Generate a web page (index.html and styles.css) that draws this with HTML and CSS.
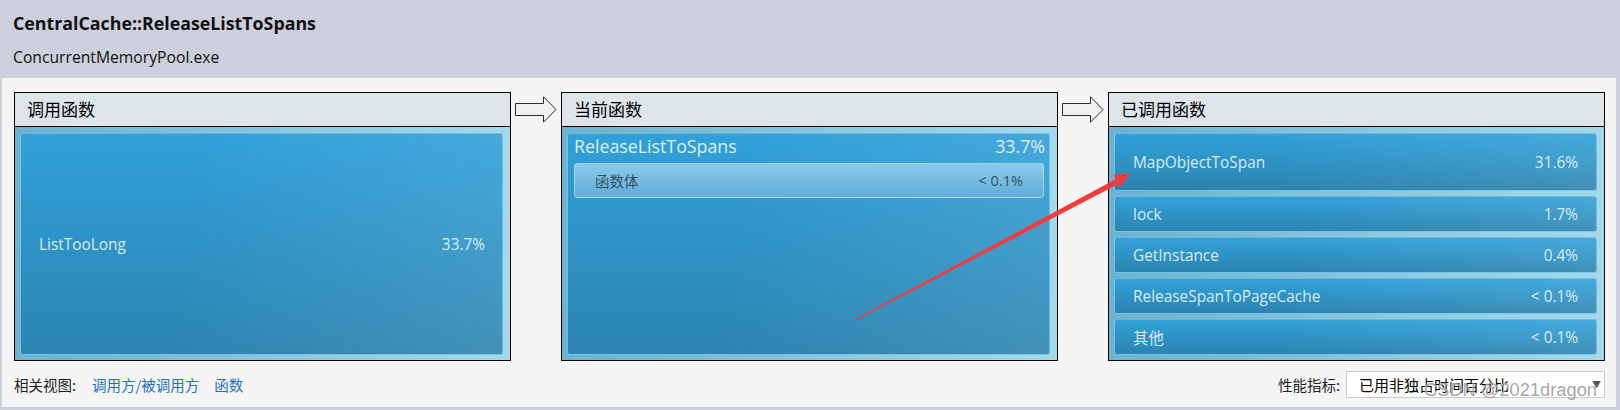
FILE: index.html
```html
<!DOCTYPE html>
<html lang="zh-CN">
<head>
<meta charset="utf-8">
<title>CentralCache::ReleaseListToSpans</title>
<link rel="stylesheet" href="styles.css">
</head>
<body>
<div class="window">
  <header class="hdr">
    <div class="title">CentralCache::ReleaseListToSpans</div>
    <div class="sub">ConcurrentMemoryPool.exe</div>
  </header>
  <main class="content">
    <div class="panels">
      <section class="panel">
        <div class="ph">调用函数</div>
        <div class="pb">
          <div class="tile big"><span>ListTooLong</span><span>33.7%</span></div>
        </div>
      </section>
      <div class="flow">
        <svg width="42" height="27" viewBox="0 0 42 27"><path d="M0.5 7.5H28.5V0.8L41 13.5L28.5 26.2V19.5H0.5Z" fill="#f2f2f2" stroke="#2b2b2b" stroke-width="1"/></svg>
      </div>
      <section class="panel">
        <div class="ph">当前函数</div>
        <div class="pb">
          <div class="tile cur">
            <div class="cur-head"><span>ReleaseListToSpans</span><span>33.7%</span></div>
            <div class="body-item"><span>函数体</span><span>&lt; 0.1%</span></div>
          </div>
        </div>
      </section>
      <div class="flow">
        <svg width="42" height="27" viewBox="0 0 42 27"><path d="M0.5 7.5H28.5V0.8L41 13.5L28.5 26.2V19.5H0.5Z" fill="#f2f2f2" stroke="#2b2b2b" stroke-width="1"/></svg>
      </div>
      <section class="panel">
        <div class="ph">已调用函数</div>
        <div class="pb list">
          <div class="tile item first"><span>MapObjectToSpan</span><span>31.6%</span></div>
          <div class="tile item"><span>lock</span><span>1.7%</span></div>
          <div class="tile item"><span>GetInstance</span><span>0.4%</span></div>
          <div class="tile item"><span>ReleaseSpanToPageCache</span><span>&lt; 0.1%</span></div>
          <div class="tile item"><span>其他</span><span>&lt; 0.1%</span></div>
        </div>
      </section>
    </div>
    <div class="footer">
      <div class="related">
        <span class="lbl">相关视图:</span>
        <a class="lnk" href="#">调用方/被调用方</a>
        <a class="lnk" href="#">函数</a>
      </div>
      <div class="metric">
        <span class="lbl">性能指标:</span>
        <div class="select"><span>已用非独占时间百分比</span><span class="caret">▼</span></div>
      </div>
    </div>
  </main>
  <svg class="annot" width="1620" height="410" viewBox="0 0 1620 410">
    <polygon points="855.3,320.6 1118.4,184.1 1119.5,188.5 1130.5,173 1113.5,175 1115.6,179.3 854.6,319.4" fill="#f53b3b"/>
  </svg>
  <div class="wm">CSDN @2021dragon</div>
</div>
</body>
</html>
```
FILE: styles.css
```css
* { box-sizing: border-box; }
html, body { margin: 0; padding: 0; }
body {
  width: 1620px;
  height: 410px;
  overflow: hidden;
  font-family: "Open Sans", "Noto Sans CJK SC", sans-serif;
  background: #cdcfdc;
}
.window {
  position: relative;
  width: 1620px;
  height: 410px;
  background: #cdcfdc;
  display: flex;
  flex-direction: column;
}
.hdr {
  height: 78px;
  padding: 11px 0 0 13px;
  color: #111;
}
.title {
  font-weight: 700;
  font-size: 17.8px;
  line-height: 24px;
}
.sub {
  font-size: 15.7px;
  line-height: 22px;
  margin-top: 11px;
}
.content {
  margin: 0 4px 3px 2px;
  flex: 1;
  background: #f5f5f5;
  display: flex;
  flex-direction: column;
}
.panels {
  display: flex;
  padding: 14px 0 0 12px;
  height: 283px;
}
.panel {
  width: 497px;
  height: 269px;
  border: 1px solid #000;
  display: flex;
  flex-direction: column;
}
.ph {
  height: 34px;
  border-bottom: 1px solid #000;
  background: #dde5e9;
  font-family: "Noto Sans CJK SC", sans-serif;
  font-size: 17px;
  line-height: 32px;
  padding-left: 12px;
  color: #000;
}
.pb {
  flex: 1;
  padding: 6px 7px 5px 5px;
  background: linear-gradient(to right, #6db2cf, #a4d9eb);
  display: flex;
  flex-direction: column;
}
.flow {
  width: 50px;
  display: flex;
  justify-content: center;
  padding-top: 4px;
}
.tile {
  border: 1px solid rgba(170, 220, 245, 0.55);
  border-radius: 3px;
  background:
    linear-gradient(100deg, rgba(255,255,255,0) 35%, rgba(255,255,255,0.1) 100%),
    linear-gradient(to bottom, #31a1da, #2c84b0);
  color: #d6ecf8;
  font-size: 15.4px;
  display: flex;
  justify-content: space-between;
  align-items: center;
}
.big {
  flex: 1;
  padding: 0 17px 0 18px;
}
.cur {
  flex: 1;
  flex-direction: column;
  justify-content: flex-start;
  align-items: stretch;
  padding: 0 4px 0 6px;
}
.cur-head {
  height: 24px;
  display: flex;
  justify-content: space-between;
  align-items: center;
  font-size: 17.8px;
  color: #ddeff9;
}
.body-item {
  margin: 5px 1px 0 0;
  height: 35px;
  border: 1px solid rgba(190, 228, 246, 0.6);
  border-radius: 4px;
  background: linear-gradient(to bottom, #8acbeb, #62acd8);
  color: #33505f;
  font-size: 14.5px;
  display: flex;
  justify-content: space-between;
  align-items: center;
  padding: 0 20px 0 20px;
}
.list { gap: 5px; }
.item {
  height: 36px;
  padding: 0 18px 0 18px;
}
.item.first { flex: 1; height: auto; }
.footer {
  flex: 1;
  display: flex;
  justify-content: space-between;
  align-items: center;
  padding: 0 11px 0 12px;
  font-family: "Noto Sans CJK SC", sans-serif;
  font-size: 14.5px;
}
.related { display: flex; align-items: center; }
.lbl { color: #1e1e1e; }
.lnk {
  color: #2470c4;
  text-decoration: none;
  margin-left: 16px;
}
.related .lnk + .lnk { margin-left: 15px; }
.metric { display: flex; align-items: center; gap: 6px; }
.select {
  width: 259px;
  height: 27px;
  border: 1px solid #c9c9d7;
  background: #fff;
  display: flex;
  align-items: center;
  justify-content: space-between;
  padding: 0 3px 0 12px;
  font-size: 15px;
  color: #000;
}
.caret { font-size: 9px; color: #555; }
.annot {
  position: absolute;
  left: 0;
  top: 0;
  pointer-events: none;
}
.wm {
  position: absolute;
  left: 1424px;
  top: 379px;
  font-family: "Liberation Sans", sans-serif;
  font-size: 18.3px;
  color: rgba(150, 150, 150, 0.85);
  text-shadow: 0 0 1px rgba(255, 255, 255, 0.6);
  pointer-events: none;
  white-space: nowrap;
}
```
